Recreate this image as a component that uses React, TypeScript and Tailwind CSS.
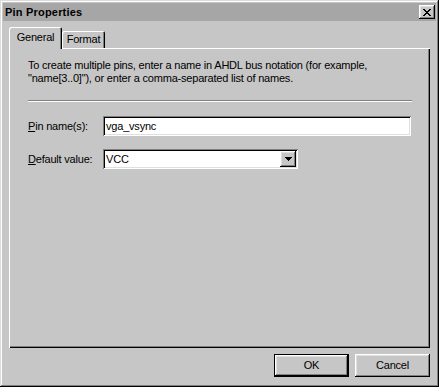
import React from "react";

const FONT = { fontFamily: '"Liberation Sans", Arial, sans-serif' };

const raised =
  "shadow-[inset_-1px_-1px_#000,inset_1px_1px_#fff,inset_-2px_-2px_#808080,inset_2px_2px_#dfdfdf]";
const sunken =
  "shadow-[inset_1px_1px_#808080,inset_-1px_-1px_#fff,inset_2px_2px_#000,inset_-2px_-2px_#dfdfdf]";

function PushButton({ label, isDefault = false }: { label: string; isDefault?: boolean }) {
  if (isDefault) {
    return (
      <div className="h-[23px] w-[75px] border border-black bg-[#c6c6c6]">
        <button
          type="button"
          className={`flex h-full w-full items-center justify-center text-[11px] text-black ${raised}`}
        >
          {label}
        </button>
      </div>
    );
  }
  return (
    <button
      type="button"
      className={`flex h-[23px] w-[75px] items-center justify-center bg-[#c6c6c6] text-[11px] text-black ${raised}`}
    >
      {label}
    </button>
  );
}

export default function App() {
  return (
    <div
      className="flex h-[387px] w-[439px] flex-col bg-[#c6c6c6] p-[3px] text-black shadow-[inset_-1px_-1px_#000,inset_1px_1px_#dcdcdc,inset_-2px_-2px_#808080,inset_2px_2px_#fff]"
      style={FONT}
    >
      {/* title bar */}
      <div className="flex h-[18px] items-center justify-between bg-[#a6a6a6] pl-[2px] pr-[1px]">
        <span className="text-[11px] font-bold leading-none tracking-[0.2px]">Pin Properties</span>
        <button
          type="button"
          className={`flex h-[14px] w-[16px] items-center justify-center bg-[#c6c6c6] ${raised}`}
        >
          <svg width="8" height="7" viewBox="0 0 8 7" shapeRendering="crispEdges">
            <path
              d="M0 0h2v1H0zM6 0h2v1H6zM1 1h2v1H1zM5 1h2v1H5zM2 2h4v1H2zM3 3h2v1H3zM2 4h4v1H2zM1 5h2v1H1zM5 5h2v1H5zM0 6h2v1H0zM6 6h2v1H6z"
              fill="#000"
            />
          </svg>
        </button>
      </div>

      <div className="flex flex-1 flex-col px-[6px] pt-[6px] tracking-[-0.2px]">
        {/* tabs */}
        <div className="relative z-10 flex h-[21px] items-end">
          <div className="-mb-px flex h-[22px] w-[53px] items-center justify-center rounded-t-[2px] bg-[#c6c6c6] pb-[2px] text-[11px] shadow-[inset_1px_1px_#fff,inset_-1px_0_#000,inset_-2px_0_#808080]">
            General
          </div>
          <div className="flex h-[17px] w-[43px] items-center justify-center rounded-t-[2px] text-[11px] shadow-[inset_1px_1px_#fff,inset_-1px_0_#000,inset_-2px_0_#808080]">
            Format
          </div>
        </div>

        {/* panel */}
        <div className="flex h-[300px] flex-col pl-[19px] pr-[18px] pt-[11px] shadow-[inset_1px_1px_#fff,inset_-1px_-1px_#000,inset_-2px_-2px_#808080]">
          <p className="text-[11px] leading-[13px]">
            To create multiple pins, enter a name in AHDL bus notation (for example,
            <br />
            "name[3..0]"), or enter a comma-separated list of names.
          </p>
          <div className="mt-[15px] h-[2px] border-b border-t border-b-white border-t-[#808080]" />

          <div className="mt-[14px] flex items-center">
            <label className="w-[75px] text-[11px]">
              <u>P</u>in name(s):
            </label>
            <div className={`flex h-[20px] w-[308px] items-center bg-white px-[3px] text-[11px] ${sunken}`}>
              vga_vsync
            </div>
          </div>

          <div className="mt-[13px] flex items-center">
            <label className="w-[75px] text-[11px]">
              <u>D</u>efault value:
            </label>
            <div
              className={`flex h-[20px] w-[195px] items-center justify-between bg-white pl-[3px] pr-[2px] text-[11px] ${sunken}`}
            >
              <span>VCC</span>
              <span className={`flex h-[16px] w-[16px] items-center justify-center bg-[#c6c6c6] ${raised}`}>
                <svg width="7" height="4" viewBox="0 0 7 4" shapeRendering="crispEdges">
                  <path d="M0 0h7v1H0zM1 1h5v1H1zM2 2h3v1H2zM3 3h1v1H3z" fill="#000" />
                </svg>
              </span>
            </div>
          </div>
        </div>

        {/* footer */}
        <div className="mt-[6px] flex justify-end gap-[6px]">
          <PushButton label="OK" isDefault />
          <PushButton label="Cancel" />
        </div>
      </div>
    </div>
  );
}
